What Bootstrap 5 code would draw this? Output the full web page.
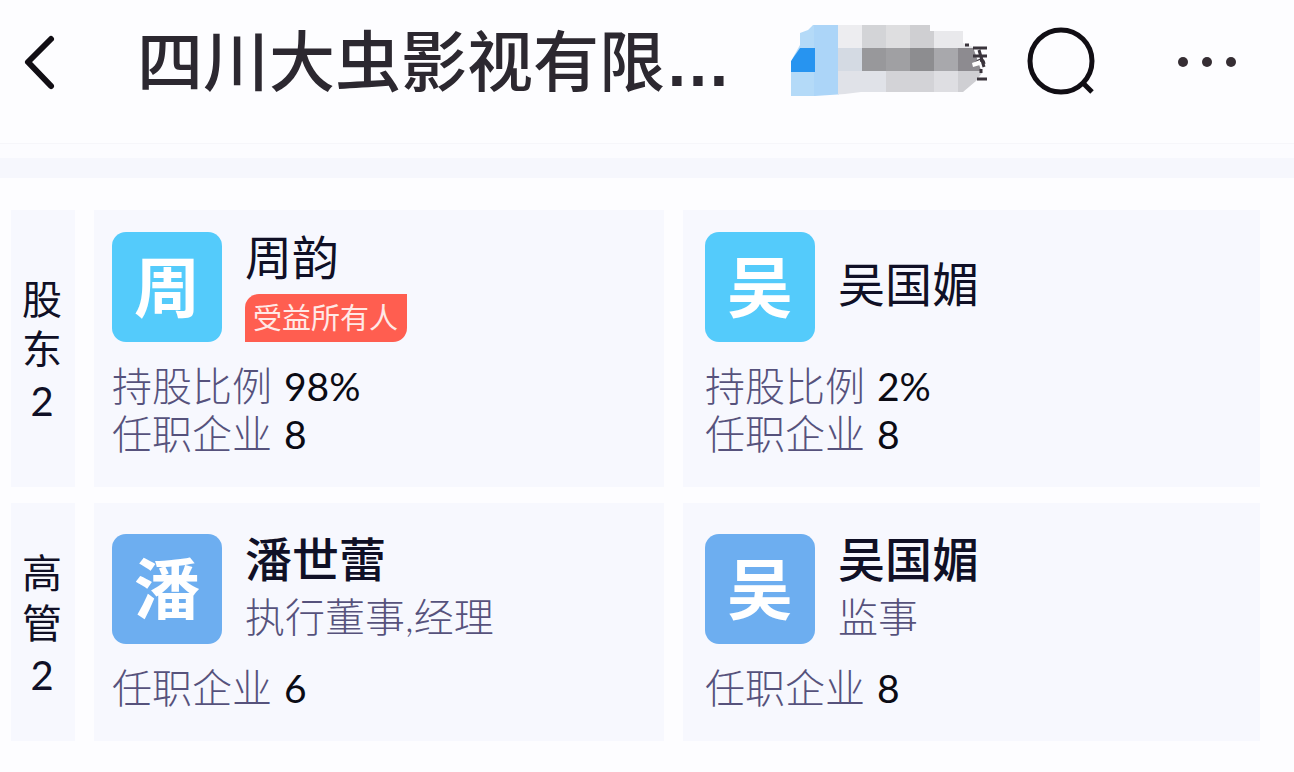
<!DOCTYPE html>
<html lang="zh-CN">
<head>
<meta charset="utf-8">
<meta name="viewport" content="width=device-width, initial-scale=1">
<title>四川大虫影视有限公司</title>
<link href="https://cdn.jsdelivr.net/npm/bootstrap@5.3.0/dist/css/bootstrap.min.css" rel="stylesheet">
<style>
body{background:#fdfdff;color:#101026;font-family:Lato,"Noto Sans CJK SC",sans-serif}
.topbar{height:144px;padding:0 50px 20px 20px;border-bottom:1px solid #f6f6fa}
.icon-btn{border:0;background:none;padding:0;display:flex;color:#110e14}
.page-title{font-size:66px;line-height:76px;font-weight:500;color:#2c2830;margin-left:79px}
.page-title .dots{font-family:"Liberation Sans",sans-serif;font-weight:700}
.strip{height:34px;background:linear-gradient(#fcfcff 0 14px,#f6f7fd 14px)}
.brand{margin-left:60px}
.search{margin-left:36px}
.board{display:grid;grid-template-columns:64px 570fr 577fr;column-gap:19px;row-gap:16px;padding:32px 34px 30px 11px}
.side,.person{background:#f7f8fe}
.side{font-size:40px;line-height:54px;font-weight:400;padding:5px 2px 0 0}
.side h2{font-size:40px;line-height:50px;font-weight:400;width:40px;margin:0}
.person{padding:22px 18px 29px}
.person.end-col{padding-left:22px}
.person.officer{padding-top:31px}
.avatar{width:110px;height:110px;border-radius:14px;background:#54cbfb;color:#fff;font-size:66px;font-weight:700;line-height:110px}
.officer .avatar{background:#6daef0}
.who{margin-bottom:20px;gap:23px}
.who h3{font-size:47px;line-height:50px;font-weight:400;margin:0 0 6px}
.who h3.strong-name{font-weight:500}
.owner-tag{background:#ff5e50;color:#ffe9e6;font-size:29px;line-height:48px;padding:0 9px 0 8px;border-radius:14px 0 14px 0;margin-top:12px}
.role{font-size:40px;line-height:54px}
.role,.facts dt{font-weight:300;color:#56527c}
.facts{margin:0;font-size:40px;line-height:48px}
.facts dd{margin:0 0 0 12px;font-size:39px;font-weight:400;color:#0b0b14}
</style>
</head>
<body>
<header class="topbar d-flex align-items-center">
<button class="icon-btn" aria-label="返回"><svg width="38" height="60" viewBox="0 0 38 60" fill="none" stroke="currentColor" stroke-width="6" stroke-linecap="round" stroke-linejoin="round"><path d="M31 7 8 30 31 54"/></svg></button>
<h1 class="page-title mb-0 text-nowrap">四川大虫影视有限<span class="dots">…</span></h1>
<svg class="brand flex-shrink-0" width="200" height="74" viewBox="0 0 200 74" aria-hidden="true">
<defs><clipPath id="blot"><path d="M22 0H139V6H172V18L182 22 191 48 185 56 172 67H70L54 69 24 71H0V36L9 20V8L17 5Z"/></clipPath></defs>
<g clip-path="url(#blot)">
<path fill="#b4daf8" d="M0 0H24V72H0Z"/><path fill="#acd5f8" d="M23 0H48V72H23Z"/>
<path fill="#ededf0" d="M47 0H72V24H47Z"/><path fill="#d3d4d7" d="M71 0H96V24H71Z"/><path fill="#dedee0" d="M95 0H120V24H95Z"/><path fill="#cfcfd2" d="M119 0H143V24H119Z"/><path fill="#e9e9ec" d="M143 0H192V24H143Z"/>
<path fill="#d4dae3" d="M47 23H72V47H47Z"/><path fill="#98989b" d="M71 23H96V47H71Z"/><path fill="#a0a0a3" d="M95 23H120V47H95Z"/><path fill="#8d8d90" d="M119 23H143V47H119Z"/><path fill="#a8a8ac" d="M143 23H168V47H143Z"/><path fill="#8d8b90" d="M167 23H192V47H167Z"/>
<path fill="#e0e2e8" d="M47 46H96V72H47Z"/><path fill="#d3d3d7" d="M95 46H143V72H95Z"/><path fill="#dedee2" d="M143 46H168V72H143Z"/><path fill="#cfcfd3" d="M167 46H192V72H167Z"/>
<path fill="#2794f0" d="M0 47V36L9 23H24V47Z"/>
</g>
<path d="M174 20h4M182 23h14M182 31h14M186 54h10M188 25l5 17M184 39q8-8 9 0M190 48v-4" fill="none" stroke="#3a343c" stroke-width="3"/><path d="M181 38l8-3v5l-7 2Z" fill="#fff"/>
</svg>
<button class="icon-btn search" aria-label="搜索"><svg width="72" height="74" viewBox="0 0 72 74" fill="none" stroke="currentColor" stroke-width="5"><circle cx="34" cy="36" r="31"/><path d="M56 58 65 67"/></svg></button>
<button class="icon-btn ms-auto" aria-label="更多"><svg width="68" height="20" viewBox="0 0 68 20" fill="#352d33"><circle cx="7" cy="10" r="5"/><circle cx="31" cy="10" r="5"/><circle cx="55" cy="10" r="5"/></svg></button>
</header>
<div class="strip"></div>
<main class="board">
<div class="side d-flex flex-column align-items-center justify-content-center"><h2>股东</h2><span>2</span></div>
<article class="person">
<div class="who d-flex"><div class="avatar flex-shrink-0 text-center">周</div><div><h3>周韵</h3><div class="owner-tag">受益所有人</div></div></div>
<dl class="facts"><div class="d-flex"><dt>持股比例</dt><dd>98%</dd></div><div class="d-flex"><dt>任职企业</dt><dd>8</dd></div></dl>
</article>
<article class="person end-col">
<div class="who d-flex align-items-center"><div class="avatar flex-shrink-0 text-center">吴</div><h3>吴国媚</h3></div>
<dl class="facts"><div class="d-flex"><dt>持股比例</dt><dd>2%</dd></div><div class="d-flex"><dt>任职企业</dt><dd>8</dd></div></dl>
</article>
<div class="side d-flex flex-column align-items-center justify-content-center"><h2>高管</h2><span>2</span></div>
<article class="person officer">
<div class="who d-flex"><div class="avatar flex-shrink-0 text-center">潘</div><div><h3 class="strong-name">潘世蕾</h3><div class="role">执行董事,经理</div></div></div>
<dl class="facts"><div class="d-flex"><dt>任职企业</dt><dd>6</dd></div></dl>
</article>
<article class="person officer end-col">
<div class="who d-flex"><div class="avatar flex-shrink-0 text-center">吴</div><div><h3 class="strong-name">吴国媚</h3><div class="role">监事</div></div></div>
<dl class="facts"><div class="d-flex"><dt>任职企业</dt><dd>8</dd></div></dl>
</article>
</main>
<script src="https://cdn.jsdelivr.net/npm/bootstrap@5.3.0/dist/js/bootstrap.bundle.min.js"></script>
</body>
</html>
